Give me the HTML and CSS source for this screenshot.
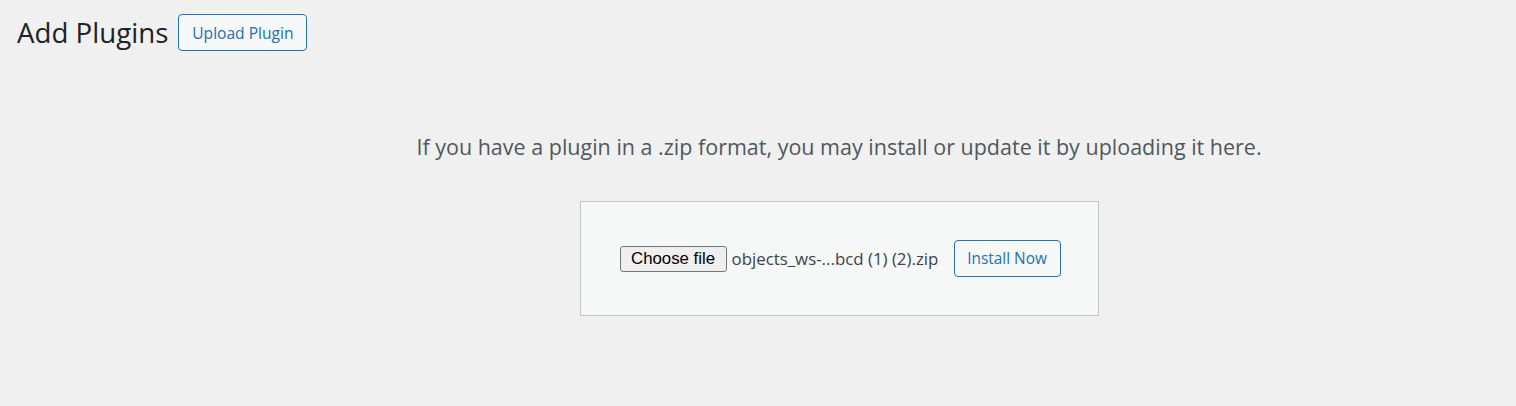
FILE: index.html
```html
<!DOCTYPE html>
<html>
<head>
<meta charset="utf-8">
<link rel="stylesheet" href="styles.css">
</head>
<body>
<div class="wrap">
  <div class="header">
    <h1 class="title">Add Plugins</h1>
    <button class="wp-btn upload-btn">Upload Plugin</button>
  </div>
  <div class="upload-plugin">
    <p class="install-help">If you have a plugin in a .zip format, you may install or update it by uploading it here.</p>
    <form class="upload-form">
      <span class="file-btn">Choose file</span>
      <span class="file-name">objects_ws-...bcd (1) (2).zip</span>
      <button type="button" class="wp-btn install-btn">Install Now</button>
    </form>
  </div>
</div>
</body>
</html>
```
FILE: styles.css
```css
html, body {
  margin: 0;
  padding: 0;
  background: #f0f0f1;
  height: 100%;
}
body {
  font-family: "Open Sans", "Noto Sans", sans-serif;
  color: #3c434a;
}
.wrap {
  padding: 14px 0 0 17px;
}
.header {
  display: flex;
  align-items: center;
  gap: 10px;
}
.title {
  margin: 0;
  font-size: 27.7px;
  font-weight: 400;
  color: #1d2327;
  line-height: 37px;
}
.wp-btn {
  font-family: "Open Sans", "Noto Sans", sans-serif;
  background: #f6f7f7;
  border: 1px solid #2271b1;
  color: #2271b1;
  border-radius: 4px;
  height: 37px;
  padding: 0;
  cursor: pointer;
  box-sizing: border-box;
}
.upload-btn {
  width: 129px;
  font-size: 15.6px;
}
.upload-plugin {
  padding-left: 145px;
  display: flex;
  flex-direction: column;
  align-items: center;
}
.install-help {
  margin: 72px 0 0 0;
  font-size: 21.5px;
  line-height: 48px;
  color: #50575e;
}
.upload-form {
  margin-top: 30px;
  width: 519px;
  height: 115px;
  box-sizing: border-box;
  border: 1px solid #c3c4c7;
  background: #f6f7f7;
  display: flex;
  align-items: center;
  padding-left: 39px;
}
.file-btn {
  font-family: "Liberation Sans", Arial, sans-serif;
  font-size: 16.8px;
  color: #000;
  background: #efefef;
  border: 1px solid #767676;
  border-radius: 3px;
  height: 26px;
  width: 107px;
  box-sizing: border-box;
  display: flex;
  align-items: center;
  justify-content: center;
}
.file-name {
  margin-left: 5px;
  font-size: 16.85px;
  color: #3c434a;
  width: 222px;
  white-space: nowrap;
}
.install-btn {
  width: 107px;
  font-size: 15.4px;
}
```
